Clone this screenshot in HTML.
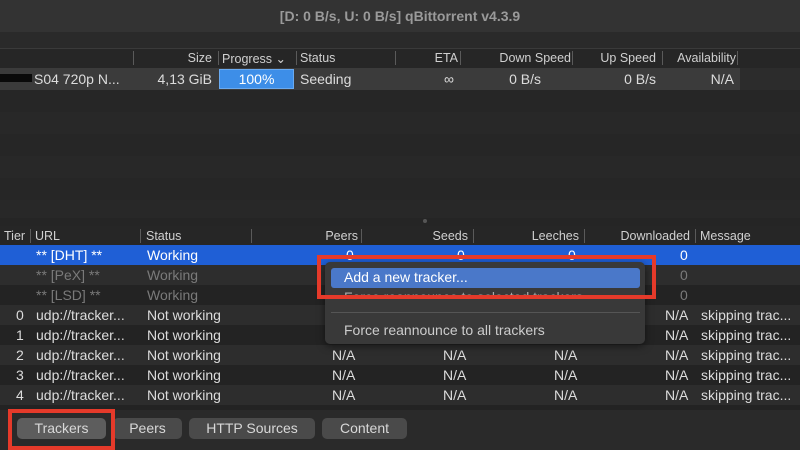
<!DOCTYPE html>
<html><head><meta charset="utf-8"><style>
*{margin:0;padding:0;box-sizing:border-box}
body{width:800px;height:450px;overflow:hidden;background:#282828;font-family:"Liberation Sans",sans-serif;color:#dcdcdc;position:relative;font-size:14px}
.a{position:absolute;white-space:nowrap}
.r{position:absolute;left:0;width:800px;height:20px}
.t{position:absolute;top:2px;white-space:nowrap}
.h{font-size:12.5px;color:#d0d0d0}
.sep{position:absolute;width:1px;background:#5a5a5a}
.tab{position:absolute;top:418px;height:21px;background:#4a4a4a;border-radius:5px;color:#d8d8d8;font-size:14px;text-align:center;line-height:21px}
</style></head><body>
<div class="a" style="left:0;top:0;width:800px;height:32px;background:#333"></div>
<div class="a" style="left:0;top:8px;width:800px;text-align:center;color:#9a9a9a;font-size:14px;font-weight:bold">[D: 0 B/s, U: 0 B/s] qBittorrent v4.3.9</div>
<div class="a" style="left:0;top:32px;width:800px;height:16px;background:#2a2a2a"></div>
<div class="a" style="left:0;top:48px;width:800px;height:20px;background:#262626;border-top:1px solid #3a3a3a"></div>
<div class="a h" style="left:0;top:51px;width:800px;height:16px">
<span class="a" style="right:588px">Size</span><span class="a" style="left:222px">Progress ⌄</span><span class="a" style="left:300px">Status</span><span class="a" style="right:342px">ETA</span><span class="a" style="right:229px">Down Speed</span><span class="a" style="right:144px">Up Speed</span><span class="a" style="right:64px">Availability</span></div>
<div class="sep" style="left:133px;top:51px;height:14px"></div>
<div class="sep" style="left:218px;top:51px;height:14px"></div><div class="sep" style="left:296px;top:51px;height:14px"></div>
<div class="sep" style="left:395px;top:51px;height:14px"></div><div class="sep" style="left:460px;top:51px;height:14px"></div>
<div class="sep" style="left:572px;top:51px;height:14px"></div><div class="sep" style="left:662px;top:51px;height:14px"></div><div class="sep" style="left:737px;top:51px;height:14px"></div>
<div class="a" style="left:0;top:68px;width:740px;height:22px;background:#3b3b3b"></div>
<div class="a" style="left:740px;top:68px;width:60px;height:22px;background:#2c2c2c"></div>
<div class="a" style="left:0;top:74px;width:32px;height:8px;background:#0a0a0a"></div>
<div class="a" style="left:34px;top:71px;font-size:14px">S04 720p N...</div>
<div class="a" style="right:588px;top:71px">4,13 GiB</div>
<div class="a" style="left:219px;top:69px;width:75px;height:20px;background:#3d8ee8;border:1px solid #6aaaf0;color:#fff;text-align:center;line-height:18px">100%</div>
<div class="a" style="left:300px;top:71px">Seeding</div>
<div class="a" style="left:444px;top:71px">∞</div>
<div class="a" style="right:259px;top:71px">0 B/s</div>
<div class="a" style="right:144px;top:71px">0 B/s</div>
<div class="a" style="right:66px;top:71px">N/A</div>
<div class="a" style="left:0;top:90px;width:800px;height:22px;background:#262626"></div>
<div class="a" style="left:0;top:134px;width:800px;height:22px;background:#262626"></div>
<div class="a" style="left:0;top:178px;width:800px;height:22px;background:#262626"></div>
<div class="a" style="left:0;top:218px;width:800px;height:8px;background:#252525"></div>
<div class="a" style="left:423px;top:219px;width:4px;height:4px;border-radius:2px;background:#555"></div>
<div class="a" style="left:0;top:226px;width:800px;height:19px;background:#262626"></div>
<div class="a h" style="left:0;top:229px;width:800px;height:16px">
<span class="a" style="left:4px">Tier</span><span class="a" style="left:35px">URL</span><span class="a" style="left:146px">Status</span><span class="a" style="right:442px">Peers</span><span class="a" style="right:332px">Seeds</span><span class="a" style="right:221px">Leeches</span><span class="a" style="right:110px">Downloaded</span><span class="a" style="left:700px">Message</span></div>
<div class="sep" style="left:30px;top:229px;height:14px"></div><div class="sep" style="left:140px;top:229px;height:14px"></div>
<div class="sep" style="left:251px;top:229px;height:14px"></div><div class="sep" style="left:361px;top:229px;height:14px"></div>
<div class="sep" style="left:473px;top:229px;height:14px"></div><div class="sep" style="left:584px;top:229px;height:14px"></div><div class="sep" style="left:695px;top:229px;height:14px"></div>
<div class="r" style="top:245px;background:#1f5fd6;color:#fff"><span class="t" style="left:36px">** [DHT] **</span><span class="t" style="left:147px">Working</span><span class="t" style="left:346px">0</span><span class="t" style="left:457px">0</span><span class="t" style="left:568px">0</span><span class="t" style="left:680px">0</span></div>
<div class="r" style="top:265px;background:#2d2d2d;color:#7a7a7a"><span class="t" style="left:36px">** [PeX] **</span><span class="t" style="left:147px">Working</span><span class="t" style="left:680px">0</span></div>
<div class="r" style="top:285px;background:#232323;color:#7a7a7a"><span class="t" style="left:36px">** [LSD] **</span><span class="t" style="left:147px">Working</span><span class="t" style="left:680px">0</span></div>
<div class="r" style="top:305px;background:#2d2d2d"><span class="t" style="left:16px">0</span><span class="t" style="left:36px">udp://tracker...</span><span class="t" style="left:147px">Not working</span><span class="t" style="left:665px">N/A</span><span class="t" style="left:701px">skipping trac...</span></div>
<div class="r" style="top:325px;background:#232323"><span class="t" style="left:16px">1</span><span class="t" style="left:36px">udp://tracker...</span><span class="t" style="left:147px">Not working</span><span class="t" style="left:665px">N/A</span><span class="t" style="left:701px">skipping trac...</span></div>
<div class="r" style="top:345px;background:#2d2d2d"><span class="t" style="left:16px">2</span><span class="t" style="left:36px">udp://tracker...</span><span class="t" style="left:147px">Not working</span><span class="t" style="left:332px">N/A</span><span class="t" style="left:443px">N/A</span><span class="t" style="left:554px">N/A</span><span class="t" style="left:665px">N/A</span><span class="t" style="left:701px">skipping trac...</span></div>
<div class="r" style="top:365px;background:#232323"><span class="t" style="left:16px">3</span><span class="t" style="left:36px">udp://tracker...</span><span class="t" style="left:147px">Not working</span><span class="t" style="left:332px">N/A</span><span class="t" style="left:443px">N/A</span><span class="t" style="left:554px">N/A</span><span class="t" style="left:665px">N/A</span><span class="t" style="left:701px">skipping trac...</span></div>
<div class="r" style="top:385px;background:#2d2d2d"><span class="t" style="left:16px">4</span><span class="t" style="left:36px">udp://tracker...</span><span class="t" style="left:147px">Not working</span><span class="t" style="left:332px">N/A</span><span class="t" style="left:443px">N/A</span><span class="t" style="left:554px">N/A</span><span class="t" style="left:665px">N/A</span><span class="t" style="left:701px">skipping trac...</span></div>
<div class="r" style="top:405px;height:5px;background:#232323"></div>
<div class="a" style="left:0;top:410px;width:800px;height:40px;background:#2a2a2a"></div>
<div class="a" style="left:325px;top:262px;width:320px;height:82px;background:#393939;border-radius:5px;box-shadow:0 2px 8px rgba(0,0,0,.5)"></div>
<div class="a" style="left:331px;top:268px;width:309px;height:20px;background:#4a78c9;border-radius:3px"></div>
<div class="a" style="left:344px;top:269px;color:#fff">Add a new tracker...</div>
<div class="a" style="left:344px;top:290px;color:#aaa;height:8px;overflow:hidden;line-height:14px">Force reannounce to selected trackers</div>
<div class="a" style="left:331px;top:312px;width:309px;height:1px;background:#555"></div>
<div class="a" style="left:344px;top:322px;color:#ccc">Force reannounce to all trackers</div>
<div class="a" style="left:317px;top:255px;width:339px;height:44px;border:4px solid #e53a2a"></div>
<div class="tab" style="left:17px;width:89px;background:#5d5d5d">Trackers</div>
<div class="tab" style="left:113px;width:69px">Peers</div>
<div class="tab" style="left:189px;width:126px">HTTP Sources</div>
<div class="tab" style="left:322px;width:85px">Content</div>
<div class="a" style="left:8px;top:409px;width:107px;height:41px;border:4px solid #e53a2a"></div>
</body></html>
